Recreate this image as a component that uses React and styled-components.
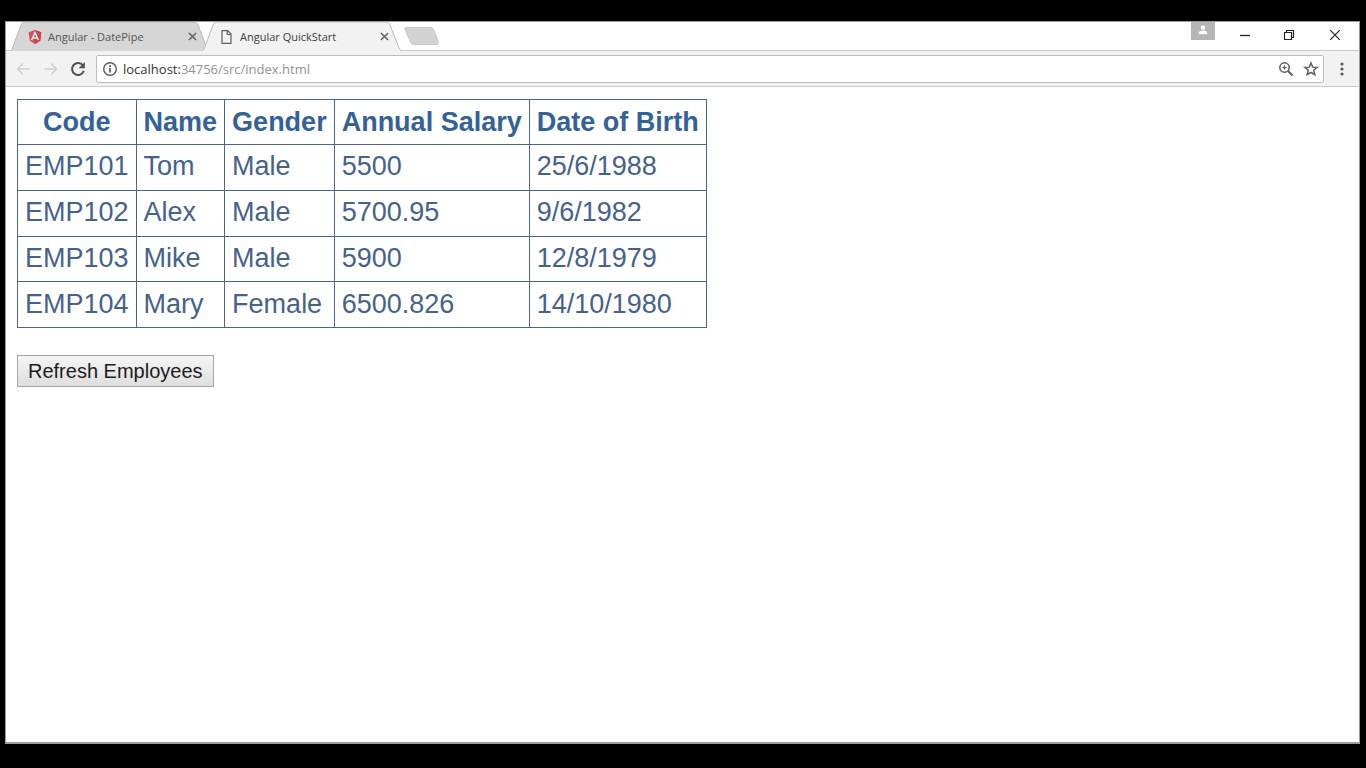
import React from "react";
import styled, { createGlobalStyle } from "styled-components";

const GlobalStyle = createGlobalStyle`
  * { box-sizing: border-box; }
  body { margin: 0; background: #000; }
`;

const uiFont = `"Open Sans", "Noto Sans", sans-serif`;

const Screen = styled.div`
  min-height: 100vh;
  padding: 21px 6px 24px 5px;
  background: #000;
  display: flex;
`;

const BrowserWindow = styled.div`
  flex: 1;
  min-width: 0;
  display: flex;
  flex-direction: column;
  background: #fff;
  border: solid #9c9c9c;
  border-width: 1px 1px 2px 1px;
`;

const TabStrip = styled.header`
  display: flex;
  height: 29px;
  padding-left: 4px;
  border-bottom: 1px solid #c8c8c8;
`;

const Tab = styled.div`
  position: relative;
  display: flex;
  align-items: center;
  width: 200px;
  height: 29px;
  margin-right: -8px;
  padding: 0 10px 0 17px;
  z-index: ${(p) => (p.$active ? 2 : 1)};
  font: 11px/16px ${uiFont};
  color: ${(p) => (p.$active ? "#3c3c3c" : "#555")};
`;

const TabShape = styled.svg`
  position: absolute;
  inset: 0;
  width: 100%;
  height: 100%;
`;

const TabIcon = styled.svg`
  position: relative;
  flex: none;
  width: 16px;
  height: 16px;
`;

const TabTitle = styled.span`
  position: relative;
  flex: 1;
  padding-left: 5px;
  white-space: nowrap;
`;

const IconButton = styled.button`
  position: relative;
  display: flex;
  flex: none;
  align-items: center;
  justify-content: center;
  width: ${(p) => p.$width || 16}px;
  height: ${(p) => p.$height || 16}px;
  padding: 0;
  border: 0;
  background: none;
  color: ${(p) => p.$color || "#5a5a5a"};
`;

const NewTab = styled(IconButton)`
  margin-left: 9px;
  align-self: center;
`;

const WindowControls = styled.div`
  display: flex;
  align-items: center;
  height: 26px;
  margin-left: auto;
`;

const ProfileButton = styled.button`
  display: flex;
  justify-content: center;
  width: 24px;
  height: 18px;
  margin-right: 7px;
  padding: 3px 0 0;
  align-self: flex-start;
  border: 0;
  background: #b5b5b5;
`;

const Toolbar = styled.nav`
  display: flex;
  align-items: center;
  height: 36px;
  padding: 0 9px 0 3px;
  background: #f2f2f2;
  border-bottom: 1px solid #c9c9c9;
`;

const AddressBar = styled.div`
  display: flex;
  flex: 1;
  align-items: center;
  height: 28px;
  margin: 0 10px 0 4px;
  padding: 0 0 0 5px;
  background: #fff;
  border: 1px solid #bdbdbd;
  border-radius: 2px;
`;

const Address = styled.div`
  flex: 1;
  padding-left: 5px;
  font: 13px/18px ${uiFont};
  color: #929292;
`;

const Host = styled.span`
  color: #333;
`;

const Page = styled.main`
  flex: 1;
  padding: 12px 11px;
  font-family: "Liberation Sans", Arial, sans-serif;
`;

const EmployeeTable = styled.table`
  height: 229px;
  border-collapse: collapse;
  color: #45628f;
  font-size: 27px;
  line-height: 30px;
`;

const HeaderCell = styled.th`
  padding: 7px;
  border: 1px solid #4c6488;
  color: #336199;
  white-space: nowrap;
`;

const Cell = styled.td`
  padding: 6px 7px 8px;
  border: 1px solid #4c6488;
`;

const RefreshButton = styled.button`
  display: block;
  height: 32px;
  margin-top: 27px;
  padding: 0 10px;
  border: 1px solid #a6a6a6;
  background: linear-gradient(#f5f5f5, #dedede);
  color: #1c1c1c;
  font: 20px/28px "Liberation Sans", Arial, sans-serif;
`;

const CloseIcon = ({ size = 9, weight = 1.5 }) => (
  <svg width={size} height={size} viewBox="0 0 10 10" stroke="currentColor" strokeWidth={weight}>
    <path d="M1 1l8 8M9 1L1 9" />
  </svg>
);

const AngularIcon = () => (
  <TabIcon viewBox="0 0 16 16">
    <path d="M8 1l6.3 2.2-1 8.6L8 15l-5.3-3.2-1-8.6z" fill="#dc4f58" />
    <path d="M8 1l6.3 2.2-1 8.6L8 15z" fill="#c84450" />
    <path d="M4.6 11L8 3.6l3.4 7.4M6 8.9h4" fill="none" stroke="#fff" strokeWidth="1.4" />
  </TabIcon>
);

const PageIcon = () => (
  <TabIcon viewBox="0 0 16 16" fill="none" stroke="#616161" strokeWidth="1.2">
    <path d="M3 1.600h5.700l3.300 3.500v9.300H3zM8.300 1.800v3.700h3.600" />
  </TabIcon>
);

const BrowserTab = ({ title, active, icon }) => (
  <Tab $active={active}>
    <TabShape viewBox="0 0 200 29" preserveAspectRatio="none">
      <path
        d="M0 29C1 28.500 2 27.500 2.500 26L11 3C12 1 12.500 0 15 0H184C186 0 187 1 188 3L197 26C197.500 27.500 198.500 28.500 200 29"
        fill={active ? "#f2f2f2" : "#d6d6d6"}
        stroke="#b8b8b8"
      />
    </TabShape>
    {icon}
    <TabTitle>{title}</TabTitle>
    <IconButton aria-label={`Close ${title}`}><CloseIcon /></IconButton>
  </Tab>
);

const Arrow = ({ forward }) => (
  <svg width="16" height="16" viewBox="0 0 16 16" fill="none" stroke="currentColor" strokeWidth="1.6">
    <path d={forward ? "M1.5 8h12M8 2.5L13.5 8 8 13.5" : "M14.5 8h-12M8 2.5L2.5 8 8 13.5"} />
  </svg>
);

const employees = [
  ["EMP101", "Tom", "Male", "5500", "25/6/1988"],
  ["EMP102", "Alex", "Male", "5700.95", "9/6/1982"],
  ["EMP103", "Mike", "Male", "5900", "12/8/1979"],
  ["EMP104", "Mary", "Female", "6500.826", "14/10/1980"],
];

export default function App() {
  return (
    <Screen>
      <GlobalStyle />
      <BrowserWindow>
        <TabStrip>
          <BrowserTab title="Angular - DatePipe" icon={<AngularIcon />} />
          <BrowserTab title="Angular QuickStart" icon={<PageIcon />} active />
          <NewTab aria-label="New tab" $width={36} $height={18}>
            <svg width="36" height="18" viewBox="0 0 36 18">
              <path d="M3 .5H27C29 .5 30 1 31 3L35 14C35.500 16.500 35 17.500 33 17.500H12C9 17.500 8 17 7 14L2 3C1.500 1 1.500 .5 3 .5z" fill="#d3d3d3" stroke="#cacaca" />
            </svg>
          </NewTab>
          <WindowControls>
            <ProfileButton aria-label="Profile">
              <svg width="10" height="10" viewBox="0 0 10 10" fill="#fff">
                <circle cx="5" cy="2.600" r="2.200" />
                <path d="M.8 9.200V8c0-1.600 2.600-2.400 4.200-2.400S9.200 6.400 9.200 8v1.200z" />
              </svg>
            </ProfileButton>
            <IconButton aria-label="Minimize" $width={45} $height={26} $color="#222">
              <svg width="12" height="12" viewBox="0 0 12 12"><path d="M1 6.500h10" stroke="currentColor" strokeWidth="1.300" /></svg>
            </IconButton>
            <IconButton aria-label="Restore" $width={44} $height={26} $color="#222">
              <svg width="12" height="12" viewBox="0 0 12 12" fill="none" stroke="currentColor" strokeWidth="1.200">
                <path d="M1.500 3.500h7v7h-7zM3.500 3.500v-2h7v7h-2" />
              </svg>
            </IconButton>
            <IconButton aria-label="Close window" $width={48} $height={26} $color="#222">
              <CloseIcon size={12} weight={1} />
            </IconButton>
          </WindowControls>
        </TabStrip>
        <Toolbar>
          <IconButton aria-label="Back" $width={28} $height={28} $color="#d0d0d0"><Arrow /></IconButton>
          <IconButton aria-label="Forward" $width={27} $height={28} $color="#d0d0d0"><Arrow forward /></IconButton>
          <IconButton aria-label="Reload" $width={28} $height={28} $color="#505050">
            <svg width="16" height="16" viewBox="0 0 16 16">
              <path d="M12.900 4.400A6 6 0 1 0 13.800 9.800" fill="none" stroke="currentColor" strokeWidth="2" />
              <path d="M14.800 1v6.200H8.600z" fill="currentColor" />
            </svg>
          </IconButton>
          <AddressBar>
            <IconButton aria-label="Site information">
              <svg width="16" height="16" viewBox="0 0 16 16" fill="none" stroke="currentColor" strokeWidth="1.400">
                <circle cx="8" cy="8" r="6.300" />
                <path d="M8 7v4.500M8 4.300v1.600" strokeWidth="1.700" />
              </svg>
            </IconButton>
            <Address><Host>localhost:</Host>34756/src/index.html</Address>
            <IconButton aria-label="Zoom" $width={25}>
              <svg width="16" height="16" viewBox="0 0 16 16" fill="none" stroke="currentColor" strokeWidth="1.500">
                <circle cx="6.500" cy="6.500" r="4.700" />
                <path d="M10 10l4.500 4.500" strokeWidth="2" />
                <path d="M6.500 4.300v4.400M4.300 6.500h4.400" strokeWidth="1.200" />
              </svg>
            </IconButton>
            <IconButton aria-label="Bookmark this page" $width={25} $height={20}>
              <svg width="16" height="16" viewBox="0 0 16 16" fill="none" stroke="currentColor" strokeWidth="1.400">
                <path d="M8 1.900l1.700 4.200 4.500.3-3.500 2.900 1.200 4.400L8 11.300l-3.900 2.400 1.200-4.400-3.500-2.900 4.500-.3z" />
              </svg>
            </IconButton>
          </AddressBar>
          <IconButton aria-label="Menu">
            <svg width="16" height="16" viewBox="0 0 16 16" fill="currentColor">
              <circle cx="8" cy="3" r="1.600" /><circle cx="8" cy="8" r="1.600" /><circle cx="8" cy="13" r="1.600" />
            </svg>
          </IconButton>
        </Toolbar>
        <Page>
          <EmployeeTable>
            <thead>
              <tr>
                {["Code", "Name", "Gender", "Annual Salary", "Date of Birth"].map((h) => (
                  <HeaderCell key={h} scope="col">{h}</HeaderCell>
                ))}
              </tr>
            </thead>
            <tbody>
              {employees.map((row) => (
                <tr key={row[0]}>
                  {row.map((value, i) => <Cell key={i}>{value}</Cell>)}
                </tr>
              ))}
            </tbody>
          </EmployeeTable>
          <RefreshButton type="button">Refresh Employees</RefreshButton>
        </Page>
      </BrowserWindow>
    </Screen>
  );
}
